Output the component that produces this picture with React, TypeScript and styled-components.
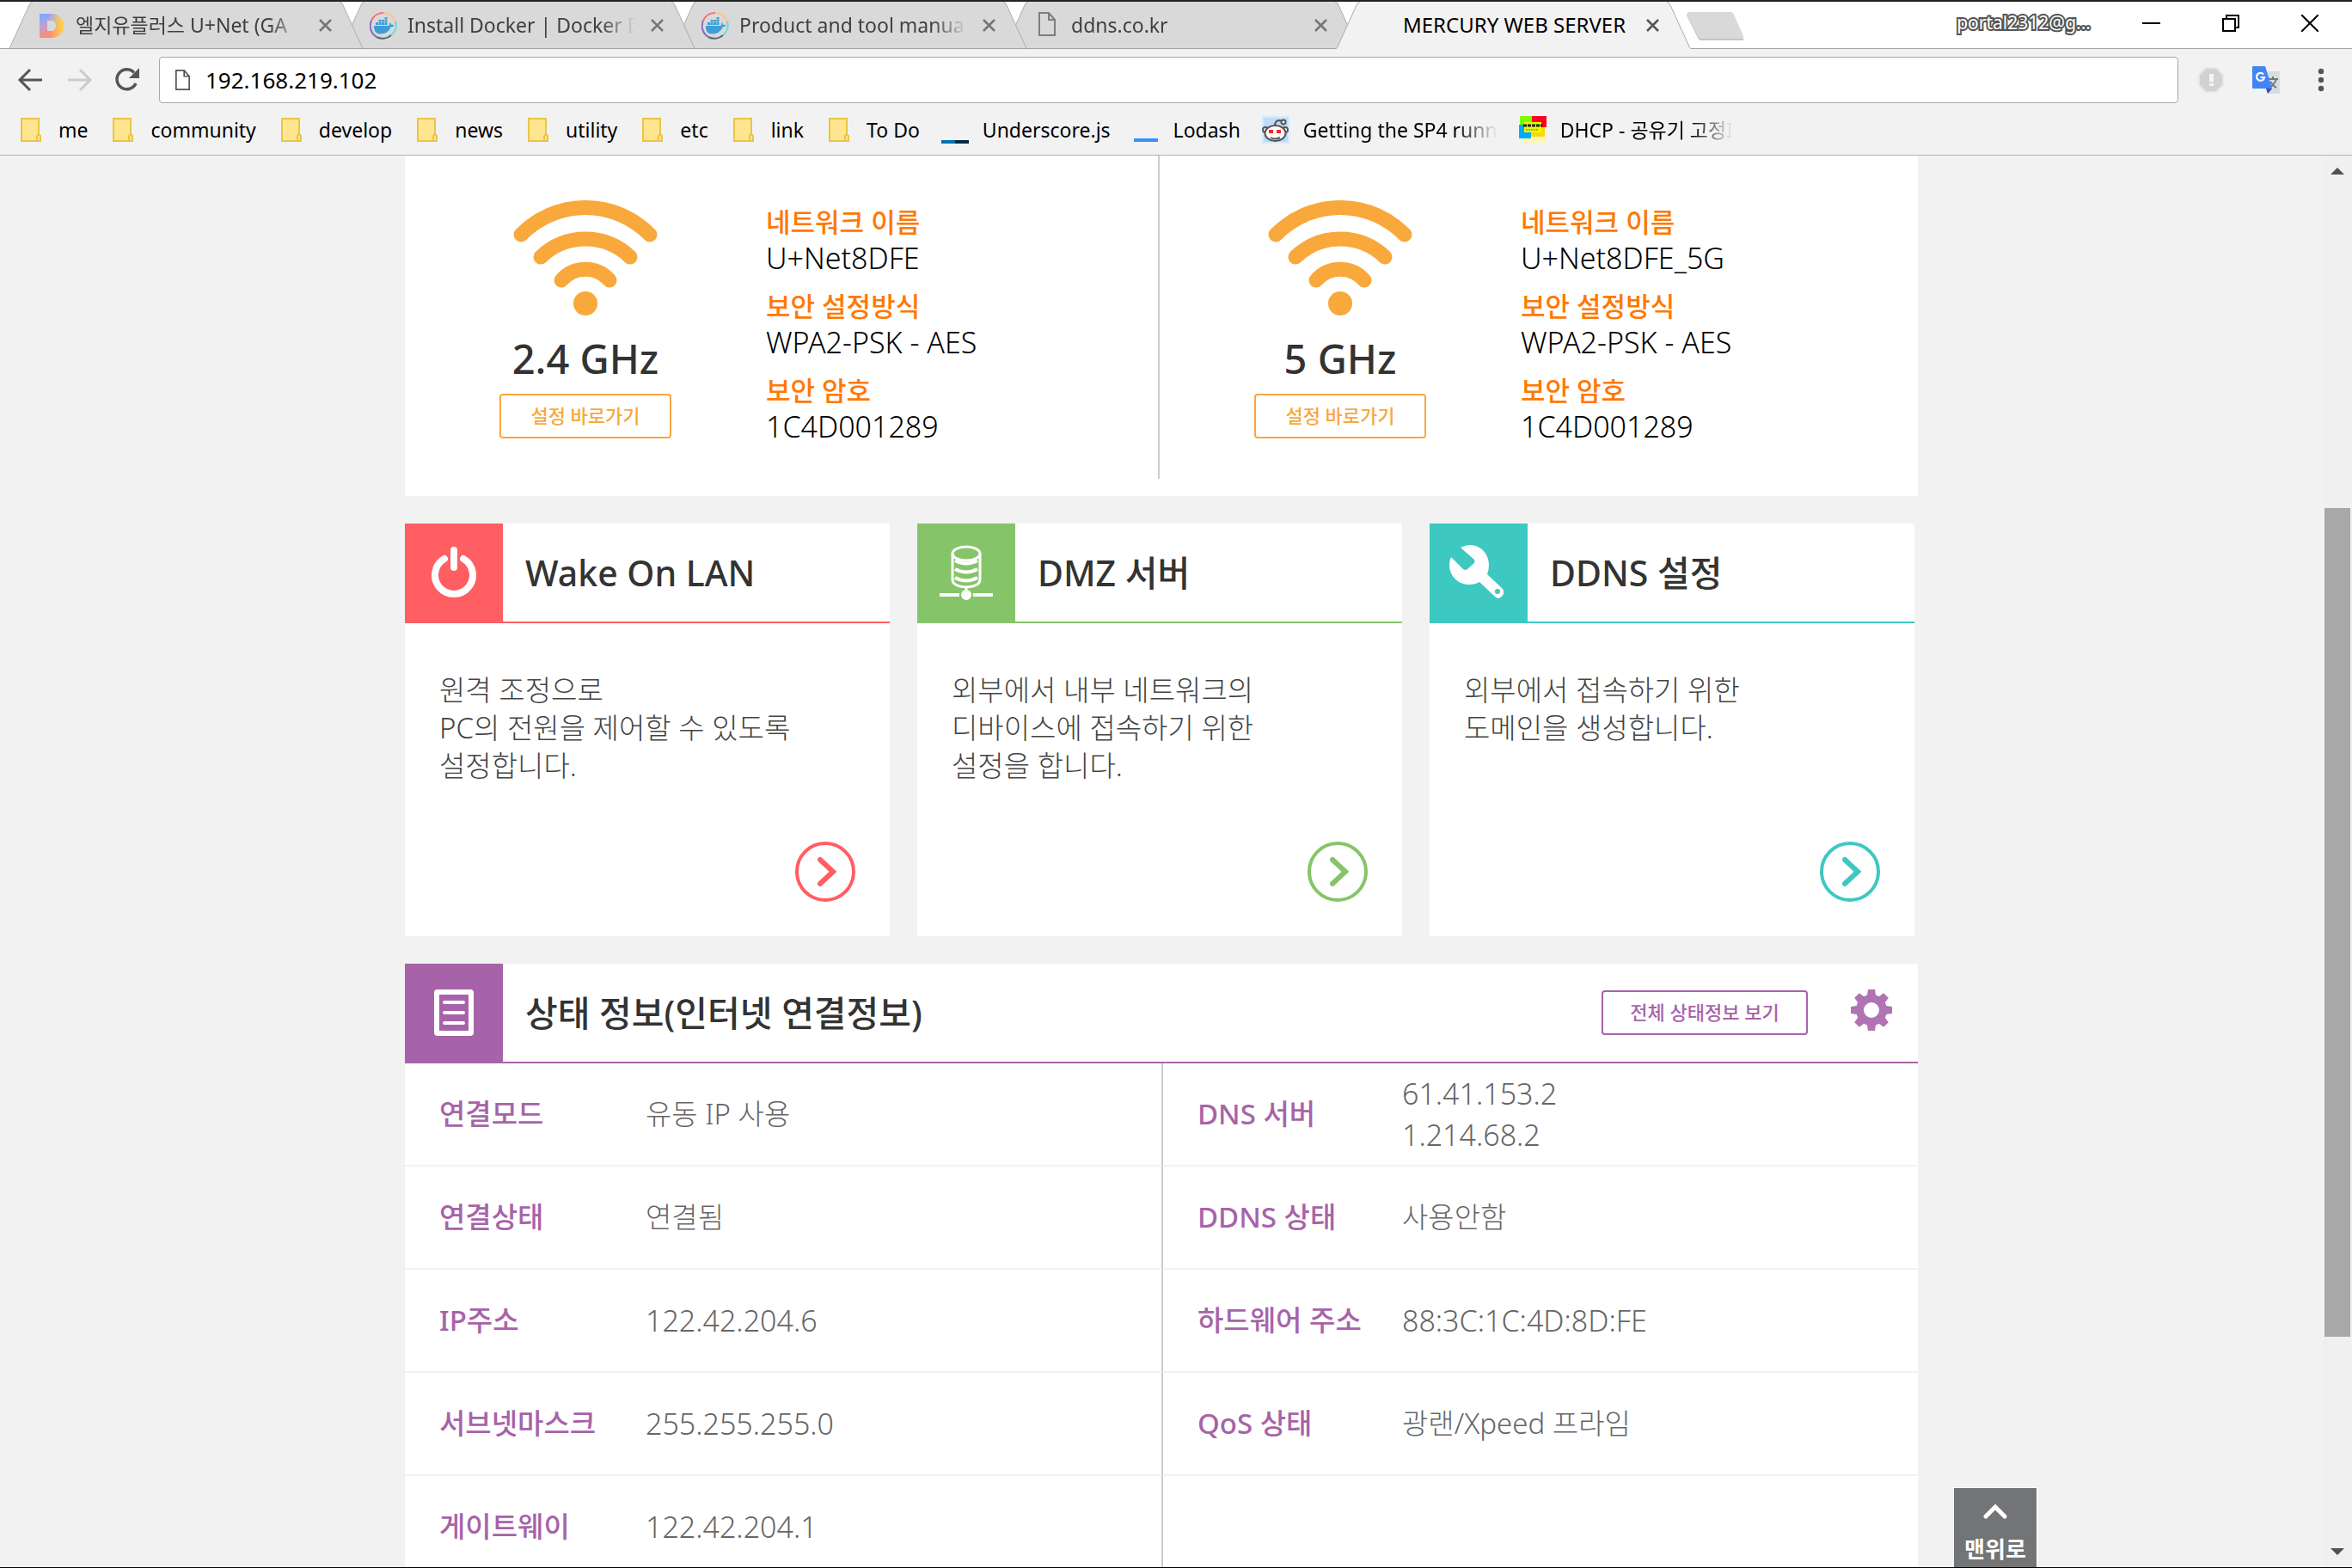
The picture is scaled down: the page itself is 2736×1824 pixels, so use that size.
import React from 'react';
import styled, { createGlobalStyle } from 'styled-components';

const FONT = '"Noto Sans", "Noto Sans CJK KR", sans-serif';

const GlobalStyle = createGlobalStyle`
  *, *::before, *::after { box-sizing: border-box; }
  html, body { margin: 0; padding: 0; height: 100%; }
  body { font-family: ${FONT}; color: #000; background: #f2f2f2; overflow: hidden; }
  button, input { font: inherit; color: inherit; margin: 0; }
  svg { display: block; flex: none; }
`;

/* ---------- window ---------- */

const Window = styled.div`
  display: flex;
  flex-direction: column;
  height: 100vh;
  border-top: 2px solid #222;
  border-bottom: 1px solid #000;
  overflow: hidden;
`;

const PlainButton = styled.button`
  display: flex;
  align-items: center;
  justify-content: center;
  padding: 0;
  border: 0;
  background: none;
  cursor: pointer;
`;

/* ---------- tab strip ---------- */

const TabStrip = styled.header`
  display: flex;
  flex: none;
  height: 55px;
  padding-left: 10px;
  background: linear-gradient(#a3a3a3, #a3a3a3) bottom / 100% 1px no-repeat #fff;
`;

const TabList = styled.div`
  display: flex;
  isolation: isolate;
`;

const TabItem = styled.div<{ $order: number }>`
  position: relative;
  z-index: ${(p) => p.$order};
  display: flex;
  align-items: center;
  width: 413px;
  height: 55px;
  padding: 0 37px 0 34px;

  & + & { margin-left: -27px; }
`;

const TabShape = styled.svg`
  position: absolute;
  inset: 0;
  z-index: -1;
`;

const TabIcon = styled.span`
  display: flex;
  flex: none;
  justify-content: center;
  width: 32px;
  height: 32px;
`;

const TabTitle = styled.button<{ $active?: boolean }>`
  flex: 1;
  min-width: 0;
  margin: 0 18px 0 12px;
  padding: 0 0 2px;
  border: 0;
  background: none;
  overflow: hidden;
  text-align: left;
  white-space: nowrap;
  font-size: ${(p) => (p.$active ? 24 : 23)}px;
  line-height: 40px;
  color: ${(p) => (p.$active ? '#000' : '#404040')};
  mask-image: ${(p) =>
    p.$active ? 'none' : 'linear-gradient(to right, #000 calc(100% - 40px), transparent)'};
`;

const NewTab = styled(PlainButton)`
  align-self: flex-start;
  margin: 12px 0 0 -5px;
`;

const WindowControls = styled.div`
  display: flex;
  align-items: center;
  gap: 72px;
  height: 50px;
  margin-left: auto;
  padding-right: 39px;
`;

const Profile = styled.button`
  margin-right: -12px;
  padding: 0 0 2px;
  border: 0;
  background: none;
  font-size: 21px;
  line-height: 32px;
  color: #fff;
  -webkit-text-stroke: 4px #555;
  paint-order: stroke fill;
`;

/* ---------- toolbar ---------- */

const Toolbar = styled.div`
  display: flex;
  align-items: center;
  flex: none;
  padding: 9px 20px 2px;
  background: #f2f2f2;
`;

const NavButtons = styled.div`
  display: flex;
  gap: 24px;
  margin-right: 21px;
`;

const Omnibox = styled.label`
  display: flex;
  align-items: center;
  flex: 1;
  gap: 18px;
  height: 54px;
  padding: 0 18px;
  border: 1px solid #a6a6a6;
  border-radius: 4px;
  background: #fff;
`;

const UrlInput = styled.input`
  flex: 1;
  min-width: 0;
  padding: 0;
  border: 0;
  outline: 0;
  background: none;
  font-size: 26px;
  line-height: 40px;
`;

const Extensions = styled.div`
  display: flex;
  align-items: center;
  gap: 32px;
  margin-left: 22px;
`;

const Bookmarks = styled.nav`
  display: flex;
  align-items: center;
  flex: none;
  gap: 25px;
  height: 59px;
  padding: 0 20px;
  border-bottom: 1px solid #b3b3b3;
  background: #f2f2f2;
`;

const Bookmark = styled.a`
  display: flex;
  align-items: center;
  gap: 16px;
  color: #000;
  text-decoration: none;
  font-size: 23px;
  line-height: 36px;
  white-space: nowrap;
`;

const FadedText = styled.span`
  max-width: 228px;
  overflow: hidden;
  mask-image: linear-gradient(to right, #000 calc(100% - 48px), transparent);
`;

/* ---------- viewport ---------- */

const Viewport = styled.div`
  display: flex;
  flex: 1;
  min-height: 0;
  background: #f2f2f2;
`;

const Page = styled.main`
  flex: 1;
  min-width: 0;
  overflow: hidden;
`;

const Container = styled.div`
  position: relative;
  display: flex;
  flex-direction: column;
  gap: 32px;
  width: 1760px;
  height: 100%;
  margin: 0 auto;
`;

const Scrollbar = styled.div`
  display: flex;
  flex-direction: column;
  align-items: center;
  flex: none;
  width: 34px;
  padding: 14px 2px;
  background: #f0f0f0;
`;

const ScrollThumb = styled.div`
  width: 30px;
  flex: 964;
  background: #a8a8a8;
`;

const ScrollSpace = styled.div<{ $grow: number }>`
  flex: ${(p) => p.$grow};
`;

/* ---------- wireless panel ---------- */

const WirelessPanel = styled.section`
  display: flex;
  flex: none;
  padding-bottom: 20px;
  background: #fff;
`;

const Band = styled.div`
  display: flex;
  flex: 0 0 calc(50% - 4px);
  gap: 110px;
  padding: 52px 0 40px 110px;

  & + & {
    flex: 1;
    border-left: 2px solid #ccc;
  }
`;

const BandSummary = styled.div`
  display: flex;
  flex-direction: column;
  align-items: center;
  width: 200px;
`;

const BandName = styled.h2`
  margin: 19px 0 10px;
  font-size: 47px;
  line-height: 62px;
  font-weight: 500;
  color: #333;
`;

const OutlineButton = styled.button<{ $color: string; $width: number }>`
  width: ${(p) => p.$width}px;
  height: 52px;
  padding: 0 0 2px;
  border: 2px solid ${(p) => p.$color};
  border-radius: 4px;
  background: #fff;
  color: ${(p) => p.$color};
  font-size: 22px;
  line-height: 40px;
  font-weight: 500;
`;

const BandInfo = styled.dl`
  display: flex;
  flex-direction: column;
  gap: 14px;
  margin: 4px 0 0;
  line-height: 42px;
`;

const BandLabel = styled.dt`
  color: #ff7800;
  font-size: 31px;
  font-weight: 500;
`;

const BandValue = styled.dd`
  margin: 0;
  font-size: 34px;
  font-weight: 300;
`;

/* ---------- feature cards ---------- */

const Cards = styled.div`
  display: grid;
  grid-template-columns: repeat(3, 1fr);
  flex: none;
  gap: 32px;
  padding-right: 4px;
`;

const Card = styled.article`
  background: #fff;
`;

const PanelHeader = styled.header<{ $color: string }>`
  display: flex;
  align-items: center;
  height: 116px;
  border-bottom: 2px solid ${(p) => p.$color};
`;

const PanelIcon = styled.div<{ $color: string }>`
  display: flex;
  align-items: center;
  justify-content: center;
  flex: none;
  width: 114px;
  height: 114px;
  background: ${(p) => p.$color};
`;

const PanelTitle = styled.h2`
  flex: 1;
  margin: 0 0 0 26px;
  font-size: 41px;
  line-height: 60px;
  font-weight: 500;
  color: #333;
`;

const CardBody = styled.div`
  display: flex;
  flex-direction: column;
  padding: 56px 40px 40px;
`;

const CardText = styled.p`
  min-height: 198px;
  margin: 0;
  font-size: 33px;
  line-height: 44px;
  font-weight: 300;
  color: #444;
  white-space: pre-line;
`;

const CardLink = styled.a`
  align-self: flex-end;
`;

/* ---------- status panel ---------- */

const StatusPanel = styled.section`
  flex: none;
  background: #fff;
`;

const SettingsButton = styled(PlainButton)`
  margin: 0 30px 6px 50px;
`;

const StatusTable = styled.table`
  width: 100%;
  border-collapse: separate;
  border-spacing: 0;
  table-layout: fixed;
  font-size: 33px;
  line-height: 48px;
`;

const StatusLabel = styled.th`
  height: 120px;
  padding: 0 0 0 40px;
  border-bottom: 2px solid #f2f2f2;
  text-align: left;
  font-weight: 500;
  color: #a763a9;
  white-space: nowrap;
`;

const StatusValue = styled.td<{ $numeric: boolean }>`
  padding: 0;
  border-bottom: 2px solid #f2f2f2;
  font-size: ${(p) => (p.$numeric ? 34 : 33)}px;
  font-weight: 300;
  color: #666;
  white-space: pre-line;

  &:nth-child(2) { border-right: 2px solid #ccc; }
`;

const ToTop = styled.button`
  position: absolute;
  left: calc(100% + 41px);
  bottom: 0;
  display: flex;
  flex-direction: column;
  align-items: center;
  gap: 15px;
  width: 98px;
  height: 93px;
  padding: 18px 0 0;
  border: 1px solid #fff;
  border-bottom: 0;
  background: #727476;
  color: #fff;
  font-size: 26px;
  line-height: 40px;
  font-weight: 700;
`;

/* ---------- icons ---------- */

const DaumIcon = () => (
  <svg width="28" height="32" viewBox="0 0 28 32">
    <defs>
      <linearGradient id="daum" x1="0" y1="0" x2="0.5" y2="1">
        <stop offset="0.1" stopColor="#7fa8ff" />
        <stop offset="0.45" stopColor="#b9a3d8" />
        <stop offset="0.85" stopColor="#ff8a73" />
      </linearGradient>
      <linearGradient id="daumRight" x1="0" y1="0" x2="1" y2="0">
        <stop offset="0.4" stopColor="#ffdf4d" stopOpacity="0" />
        <stop offset="1" stopColor="#ffd93b" />
      </linearGradient>
    </defs>
    <path fill="url(#daum)" fillRule="evenodd" d="M0 2h16q12 3 12 14t-12 14H0zM9 10v12h6q4-1 4-6t-4-6z" />
    <path fill="url(#daumRight)" fillRule="evenodd" d="M0 2h16q12 3 12 14t-12 14H0zM9 10v12h6q4-1 4-6t-4-6z" />
  </svg>
);

const DockerIcon = () => (
  <svg width="32" height="32" viewBox="0 0 32 32" fill="none">
    <g strokeWidth="2">
      <path stroke="#ffc680" d="M16 1a15 15 0 0 1 14 10" />
      <path stroke="#4fe3e0" d="M30 11a15 15 0 0 1-5 16" />
      <path stroke="#506c7c" d="M25 27a15 15 0 0 1-17 2" />
      <path stroke="#8a6cb8" d="M8 29a15 15 0 0 1-6-19" />
      <path stroke="#ff6b7a" d="M2 10a15 15 0 0 1 14-9" />
    </g>
    <path fill="#3a9fd8" d="M5 16h17q2-1 1-4 2 1 2.500 3 2-.5 3 .5-1 2-4 2-3 8-12 8-8 0-7.500-9.500z" />
    <path fill="#3a9fd8" d="M7 12h3v3H7zM10.500 12h3v3h-3zM14 12h3v3h-3zM17.500 12h3v3h-3zM10.500 9h3v2.500h-3zM14 9h3v2.500h-3zM17.500 9h3v2.500h-3zM17.500 6h3v2.500h-3z" />
  </svg>
);

const FileIcon = ({ width, height, color }: { width: number; height: number; color: string }) => (
  <svg width={width} height={height} viewBox="0 0 20 28" fill="none" stroke={color} strokeWidth="2">
    <path d="M1 1h11l7 8v18H1zM12 1v8h7" />
  </svg>
);

const CloseIcon = ({ color }: { color: string }) => (
  <svg width="15" height="15" viewBox="0 0 15 15" stroke={color} strokeWidth="2.500">
    <path d="M1 1l13 13M14 1L1 14" />
  </svg>
);

const FolderIcon = () => (
  <svg width="32" height="32" viewBox="0 0 32 32" fill="#ffe58f" stroke="#ebc445" strokeWidth="2">
    <path d="M5 3h20v26H5z" />
    <path d="M23 29v-6q2-3 4 0v6z" />
  </svg>
);

const UnderscoreIcon = () => (
  <svg width="32" height="32" viewBox="0 0 32 32">
    <path fill="#0371b5" d="M0 28h16v4H0z" />
    <path fill="#002a41" d="M16 28h16v4H16z" />
  </svg>
);

const LodashIcon = () => (
  <svg width="32" height="32" viewBox="0 0 32 32">
    <path fill="#3492ff" d="M2 26h28v4H2z" />
  </svg>
);

const RedditIcon = () => (
  <svg width="32" height="32" viewBox="0 0 32 32">
    <path fill="#d2ebfc" d="M0 0h32v32H0z" />
    <path fill="#c0dbf7" d="M2 2h28v28H2z" />
    <g stroke="#555" strokeWidth="2" fill="#fff">
      <path fill="none" d="M15 12q0-7 5-7l4 1" />
      <circle cx="25" cy="7" r="2.500" />
      <circle cx="4" cy="16" r="3" />
      <circle cx="27" cy="16" r="3" />
      <ellipse cx="15.500" cy="20" rx="12" ry="9" />
      <path fill="none" d="M10 25q5 3 11 0" />
    </g>
    <path fill="#f22" d="M8 16h5v4H8zM17 16h5v4h-5z" />
  </svg>
);

const NamsikIcon = () => (
  <svg width="32" height="32" viewBox="0 0 32 32">
    <path fill="#7dfb00" d="M1 0h14v12H1z" />
    <path fill="#fb0023" d="M15 0h17v13H15z" />
    <path fill="#00aaff" d="M0 10h14v16H0z" />
    <path fill="#ffd800" d="M14 13h16v11H14z" />
    <path fill="#fff7b0" d="M6 26h24v5H6z" />
    <path fill="#e8fb00" d="M6 7h20v12H6z" />
    <path stroke="#222" strokeWidth="3" strokeDasharray="4 1" d="M5 11h22" />
    <path stroke="#665" strokeWidth="1" strokeDasharray="2 1" d="M8 16h15" />
  </svg>
);

const ArrowIcon = ({ color, flip }: { color: string; flip?: boolean }) => (
  <svg width="32" height="32" viewBox="0 0 32 32" fill="none" stroke={color} strokeWidth="3">
    <path d={flip ? 'M3 16h25M17 4l12 12-12 12' : 'M29 16H4M15 4L3 16l12 12'} />
  </svg>
);

const ReloadIcon = () => (
  <svg width="32" height="32" viewBox="0 0 32 32">
    <path fill="none" stroke="#555" strokeWidth="3.500" d="M26 20a11.500 11.500 0 1 1-2-12.500" />
    <path fill="#555" d="M30 2v12H18z" />
  </svg>
);

const BlockIcon = () => (
  <svg width="32" height="32" viewBox="0 0 32 32">
    <path fill="#d2d2d2" stroke="#e6e6e6" strokeWidth="2" d="M10 2h12l8 8v12l-8 8H10l-8-8V10z" />
    <path fill="#f5f5f5" d="M14 9h5v9h-5zM14 20h5v3h-5z" />
  </svg>
);

const TranslateIcon = () => (
  <svg width="32" height="32" viewBox="0 0 32 32">
    <path fill="#dcdcdc" d="M12 6h19q1 0 1 1v24q0 1-1 1H18z" />
    <g fill="none" stroke="#607d8b" strokeWidth="2">
      <path d="M18 15h12M24 12v3M28 15q-2 6-8 10M21 18q3 5 7 7" />
    </g>
    <path fill="#4285f4" d="M1 0h14l8 26H1q-1 0-1-1V1q0-1 1-1z" />
    <path fill="#3a4bb5" d="M16 26h7l-5 6z" />
    <path fill="none" stroke="#fff" strokeWidth="2.200" d="M13 9.500a4.500 4.500 0 1 0 1 3.500h-4.500" />
  </svg>
);

const MenuIcon = () => (
  <svg width="32" height="32" viewBox="0 0 32 32" fill="#555">
    <circle cx="16" cy="6" r="3.200" />
    <circle cx="16" cy="16" r="3.200" />
    <circle cx="16" cy="26" r="3.200" />
  </svg>
);

const WifiIcon = () => (
  <svg width="168" height="134" viewBox="0 0 168 134" fill="none" stroke="#f9a83c" strokeWidth="17" strokeLinecap="round">
    <path d="M9 40a105 105 0 0 1 150 0" />
    <path d="M32 66a75 75 0 0 1 104 0" />
    <path d="M56 93a37 37 0 0 1 56 0" />
    <circle cx="84" cy="120" r="14" fill="#f9a83c" stroke="none" />
  </svg>
);

const PowerIcon = () => (
  <svg width="60" height="64" viewBox="0 0 60 64" fill="none" stroke="#fff" strokeLinecap="round">
    <path strokeWidth="8" d="M19 16a22 22 0 1 0 22 0" />
    <path strokeWidth="8" d="M30 6v20" />
  </svg>
);

const ServerIcon = () => (
  <svg width="64" height="66" viewBox="0 0 64 66" fill="none" stroke="#fff" strokeWidth="3">
    <ellipse cx="32" cy="11" rx="16" ry="8" />
    <path d="M16 11v30q0 8 16 9q16-1 16-9V11" />
    <path strokeWidth="4" d="M19 19q13 7 26 0M19 29q13 7 26 0M19 39q13 7 26 0" />
    <path d="M32 50v6" />
    <path strokeWidth="4" d="M1 59h23M40 59h23" />
    <circle cx="32" cy="59" r="6" fill="#fff" stroke="none" />
  </svg>
);

const WrenchIcon = () => (
  <svg width="68" height="64" viewBox="0 0 68 64" fill="#fff">
    <path
      fillRule="evenodd"
      d="M13 3Q18 0 24 0C37 0 46 11 46 23Q46 29 44 34L62 51Q64 54 63 57Q60 62 56 62L53 60L35 43Q30 46 23 46C10 46 0 36 0 23Q0 18 2 14L16 28Q19 30 21 28L29 21Q30 19 29 17ZM56 51a3 3 0 1 0 0 6a3 3 0 1 0 0-6Z"
    />
  </svg>
);

const DocumentIcon = () => (
  <svg width="48" height="54" viewBox="0 0 48 54" fill="none" stroke="#fff">
    <rect x="4" y="3" width="40" height="48" rx="1" strokeWidth="6" />
    <path strokeWidth="4" strokeLinecap="round" d="M13 15h22M13 27h22M13 39h22" />
  </svg>
);

const GearIcon = () => (
  <svg width="48" height="48" viewBox="-24 -24 48 48">
    <circle r="13.500" fill="none" stroke="#b173b3" strokeWidth="9" />
    {[0, 45, 90, 135, 180, 225, 270, 315].map((angle) => (
      <path key={angle} fill="#b173b3" transform={`rotate(${angle})`} d="M-5.500 -14L-4 -24H4L5.500 -14Z" />
    ))}
  </svg>
);

const CircleArrowIcon = ({ color }: { color: string }) => (
  <svg width="70" height="70" viewBox="0 0 70 70" fill="none" stroke={color}>
    <circle cx="35" cy="35" r="33" strokeWidth="4" />
    <path strokeWidth="6" strokeLinecap="round" d="M29 21l15 14-15 14" />
  </svg>
);

const ScrollArrow = ({ down }: { down?: boolean }) => (
  <svg width="16" height="8" viewBox="0 0 16 8" fill="#505050">
    <path d={down ? 'M0 0h16L8 8z' : 'M0 8h16L8 0z'} />
  </svg>
);

/* ---------- data ---------- */

const tabs = [
  { title: '엘지유플러스 U+Net (GA', icon: <DaumIcon /> },
  { title: 'Install Docker | Docker D', icon: <DockerIcon /> },
  { title: 'Product and tool manua', icon: <DockerIcon /> },
  { title: 'ddns.co.kr', icon: <FileIcon width={20} height={28} color="#7d7d7d" /> },
  { title: 'MERCURY WEB SERVER', icon: null, active: true },
];

const folders = ['me', 'community', 'develop', 'news', 'utility', 'etc', 'link', 'To Do'];

const sites = [
  { title: 'Underscore.js', icon: <UnderscoreIcon /> },
  { title: 'Lodash', icon: <LodashIcon /> },
  { title: 'Getting the SP4 runn', icon: <RedditIcon />, faded: true },
  { title: 'DHCP - 공유기 고정I', icon: <NamsikIcon />, faded: true },
];

const bands = [
  { name: '2.4 GHz', ssid: 'U+Net8DFE' },
  { name: '5 GHz', ssid: 'U+Net8DFE_5G' },
];

const cards = [
  {
    title: 'Wake On LAN',
    color: '#ff5e62',
    icon: <PowerIcon />,
    text: '원격 조정으로\nPC의 전원을 제어할 수 있도록\n설정합니다.',
  },
  {
    title: 'DMZ 서버',
    color: '#86c46a',
    icon: <ServerIcon />,
    text: '외부에서 내부 네트워크의\n디바이스에 접속하기 위한\n설정을 합니다.',
  },
  {
    title: 'DDNS 설정',
    color: '#3dc8c1',
    icon: <WrenchIcon />,
    text: '외부에서 접속하기 위한\n도메인을 생성합니다.',
  },
];

const statusRows = [
  ['연결모드', '유동 IP 사용', 'DNS 서버', '61.41.153.2\n1.214.68.2'],
  ['연결상태', '연결됨', 'DDNS 상태', '사용안함'],
  ['IP주소', '122.42.204.6', '하드웨어 주소', '88:3C:1C:4D:8D:FE'],
  ['서브넷마스크', '255.255.255.0', 'QoS 상태', '광랜/Xpeed 프라임'],
  ['게이트웨이', '122.42.204.1', '', ''],
];

const isNumeric = (value: string) => /^[0-9A-F.:\s]+$/.test(value);

/* ---------- app ---------- */

export default function App() {
  return (
    <>
      <GlobalStyle />
      <Window>
        <TabStrip>
          <TabList>
            {tabs.map((tab, i) => (
              <TabItem key={tab.title} $order={tab.active ? 10 : 5 - i}>
                <TabShape width="413" height="55" viewBox="0 0 413 55">
                  <path
                    fill={tab.active ? '#f2f2f2' : '#d9d9d9'}
                    d="M0 55Q2 54 3 50L24 4Q25 0 28 0H385Q388 0 389 4L410 50Q411 54 413 55Z"
                  />
                  <path
                    fill="none"
                    stroke="#ababab"
                    d="M0 54.500Q2 54 3 50L24 4Q25 .5 28 .5M385 .5Q388 .5 389 4L410 50Q411 54 413 54.500"
                  />
                  {!tab.active && <path stroke="#a3a3a3" d="M0 54.500H413" />}
                </TabShape>
                <TabIcon>{tab.icon}</TabIcon>
                <TabTitle $active={tab.active}>{tab.title}</TabTitle>
                <PlainButton aria-label="Close tab">
                  <CloseIcon color={tab.active ? '#555' : '#757575'} />
                </PlainButton>
              </TabItem>
            ))}
          </TabList>
          <NewTab aria-label="New tab">
            <svg width="67" height="33" viewBox="0 0 67 33">
              <path fill="#c4c4c4" d="M3 2h48q3 0 4 3l11 25q1 3-2 3H17q-3 0-4-3L0 4q0-2 3-2z" />
              <path fill="#d9d9d9" d="M3 0h48q3 0 4 3l11 25q1 3-2 3H17q-3 0-4-3L0 3q0-3 3-3z" />
            </svg>
          </NewTab>
          <WindowControls>
            <Profile>portal2312@g...</Profile>
            <PlainButton aria-label="Minimize">
              <svg width="21" height="20" viewBox="0 0 21 20" stroke="#000" strokeWidth="2">
                <path d="M0 10h21" />
              </svg>
            </PlainButton>
            <PlainButton aria-label="Restore">
              <svg width="20" height="20" viewBox="0 0 20 20" fill="none" stroke="#000" strokeWidth="2">
                <path d="M1 5h14v14H1zM5 5V1h14v14h-4" />
              </svg>
            </PlainButton>
            <PlainButton aria-label="Close">
              <svg width="20" height="20" viewBox="0 0 20 20" stroke="#000" strokeWidth="2">
                <path d="M0 0l20 20M20 0L0 20" />
              </svg>
            </PlainButton>
          </WindowControls>
        </TabStrip>

        <Toolbar>
          <NavButtons>
            <PlainButton aria-label="Back"><ArrowIcon color="#555" /></PlainButton>
            <PlainButton aria-label="Forward"><ArrowIcon color="#ccc" flip /></PlainButton>
            <PlainButton aria-label="Reload"><ReloadIcon /></PlainButton>
          </NavButtons>
          <Omnibox>
            <FileIcon width={17} height={24} color="#555" />
            <UrlInput type="text" aria-label="Address" defaultValue="192.168.219.102" />
          </Omnibox>
          <Extensions>
            <PlainButton aria-label="Blocker"><BlockIcon /></PlainButton>
            <PlainButton aria-label="Translate"><TranslateIcon /></PlainButton>
            <PlainButton aria-label="Menu"><MenuIcon /></PlainButton>
          </Extensions>
        </Toolbar>

        <Bookmarks>
          {folders.map((name) => (
            <Bookmark key={name} href="#">
              <FolderIcon />
              {name}
            </Bookmark>
          ))}
          {sites.map((site) => (
            <Bookmark key={site.title} href="#">
              {site.icon}
              {site.faded ? <FadedText>{site.title}</FadedText> : site.title}
            </Bookmark>
          ))}
        </Bookmarks>

        <Viewport>
          <Page>
            <Container>
              <WirelessPanel>
                {bands.map((band) => (
                  <Band key={band.name}>
                    <BandSummary>
                      <WifiIcon />
                      <BandName>{band.name}</BandName>
                      <OutlineButton $color="#f9a83c" $width={200}>설정 바로가기</OutlineButton>
                    </BandSummary>
                    <BandInfo>
                      <div>
                        <BandLabel>네트워크 이름</BandLabel>
                        <BandValue>{band.ssid}</BandValue>
                      </div>
                      <div>
                        <BandLabel>보안 설정방식</BandLabel>
                        <BandValue>WPA2-PSK - AES</BandValue>
                      </div>
                      <div>
                        <BandLabel>보안 암호</BandLabel>
                        <BandValue>1C4D001289</BandValue>
                      </div>
                    </BandInfo>
                  </Band>
                ))}
              </WirelessPanel>

              <Cards>
                {cards.map((card) => (
                  <Card key={card.title}>
                    <PanelHeader $color={card.color}>
                      <PanelIcon $color={card.color}>{card.icon}</PanelIcon>
                      <PanelTitle>{card.title}</PanelTitle>
                    </PanelHeader>
                    <CardBody>
                      <CardText>{card.text}</CardText>
                      <CardLink href="#" aria-label={card.title}>
                        <CircleArrowIcon color={card.color} />
                      </CardLink>
                    </CardBody>
                  </Card>
                ))}
              </Cards>

              <StatusPanel>
                <PanelHeader $color="#a763a9">
                  <PanelIcon $color="#a763a9"><DocumentIcon /></PanelIcon>
                  <PanelTitle>상태 정보(인터넷 연결정보)</PanelTitle>
                  <OutlineButton $color="#a763a9" $width={240}>전체 상태정보 보기</OutlineButton>
                  <SettingsButton aria-label="설정"><GearIcon /></SettingsButton>
                </PanelHeader>
                <StatusTable>
                  <colgroup>
                    <col width="280" />
                    <col width="602" />
                    <col width="278" />
                    <col />
                  </colgroup>
                  <tbody>
                    {statusRows.map(([labelA, valueA, labelB, valueB]) => (
                      <tr key={labelA}>
                        <StatusLabel scope="row">{labelA}</StatusLabel>
                        <StatusValue $numeric={isNumeric(valueA)}>{valueA}</StatusValue>
                        <StatusLabel scope="row">{labelB}</StatusLabel>
                        <StatusValue $numeric={isNumeric(valueB)}>{valueB}</StatusValue>
                      </tr>
                    ))}
                  </tbody>
                </StatusTable>
              </StatusPanel>

              <ToTop>
                <svg width="30" height="18" viewBox="0 0 30 18" fill="none" stroke="#fff" strokeWidth="5" strokeLinecap="round">
                  <path d="M4 15L15 4l11 11" />
                </svg>
                맨위로
              </ToTop>
            </Container>
          </Page>
          <Scrollbar>
            <ScrollArrow />
            <ScrollSpace $grow={388} />
            <ScrollThumb />
            <ScrollSpace $grow={246} />
            <ScrollArrow down />
          </Scrollbar>
        </Viewport>
      </Window>
    </>
  );
}
